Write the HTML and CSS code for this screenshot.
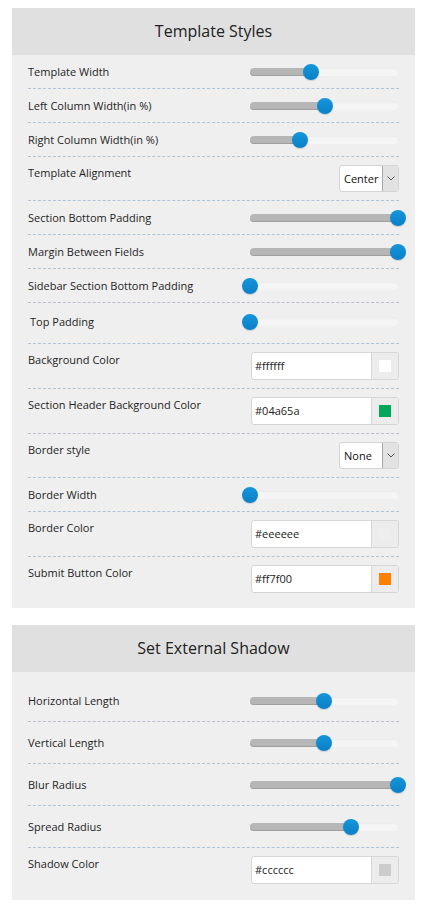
FILE: index.html
```html
<!DOCTYPE html>
<html>
<head>
<meta charset="utf-8">
<link rel="stylesheet" href="styles.css">
</head>
<body>
<div class="panel">
  <div class="panel-head">Template Styles</div>
  <div class="panel-body">
    <div class="row">
      <span class="label">Template Width</span>
      <div class="ctrl"><div class="slider"><div class="fill" style="width:41%"></div><span class="thumb" style="left:41%"></span></div></div>
    </div>
    <div class="row">
      <span class="label">Left Column Width(in %)</span>
      <div class="ctrl"><div class="slider"><div class="fill" style="width:51%"></div><span class="thumb" style="left:51%"></span></div></div>
    </div>
    <div class="row">
      <span class="label">Right Column Width(in %)</span>
      <div class="ctrl"><div class="slider"><div class="fill" style="width:34%"></div><span class="thumb" style="left:34%"></span></div></div>
    </div>
    <div class="row row-top">
      <span class="label">Template Alignment</span>
      <div class="ctrl ctrl-end">
        <div class="select"><span class="select-text">Center</span><span class="select-btn"><svg width="8" height="5" viewBox="0 0 8 5"><path d="M0.5 0.5 L4 4 L7.5 0.5" fill="none" stroke="#555" stroke-width="1"/></svg></span></div>
      </div>
    </div>
    <div class="row">
      <span class="label">Section Bottom Padding</span>
      <div class="ctrl"><div class="slider"><div class="fill" style="width:100%"></div><span class="thumb" style="left:100%"></span></div></div>
    </div>
    <div class="row">
      <span class="label">Margin Between Fields</span>
      <div class="ctrl"><div class="slider"><div class="fill" style="width:100%"></div><span class="thumb" style="left:100%"></span></div></div>
    </div>
    <div class="row">
      <span class="label">Sidebar Section Bottom Padding</span>
      <div class="ctrl"><div class="slider"><div class="fill" style="width:0%"></div><span class="thumb" style="left:0%"></span></div></div>
    </div>
    <div class="row row-tp">
      <span class="label label-indent">Top Padding</span>
      <div class="ctrl"><div class="slider"><div class="fill" style="width:0%"></div><span class="thumb" style="left:0%"></span></div></div>
    </div>
    <div class="row row-top">
      <span class="label">Background Color</span>
      <div class="ctrl ctrl-end">
        <div class="color"><span class="color-text">#ffffff</span><span class="color-btn"><span class="swatch" style="background:#ffffff"></span></span></div>
      </div>
    </div>
    <div class="row row-top">
      <span class="label">Section Header Background Color</span>
      <div class="ctrl ctrl-end">
        <div class="color"><span class="color-text">#04a65a</span><span class="color-btn"><span class="swatch" style="background:#04a65a"></span></span></div>
      </div>
    </div>
    <div class="row row-top">
      <span class="label">Border style</span>
      <div class="ctrl ctrl-end">
        <div class="select"><span class="select-text">None</span><span class="select-btn"><svg width="8" height="5" viewBox="0 0 8 5"><path d="M0.5 0.5 L4 4 L7.5 0.5" fill="none" stroke="#555" stroke-width="1"/></svg></span></div>
      </div>
    </div>
    <div class="row">
      <span class="label">Border Width</span>
      <div class="ctrl"><div class="slider"><div class="fill" style="width:0%"></div><span class="thumb" style="left:0%"></span></div></div>
    </div>
    <div class="row row-top">
      <span class="label">Border Color</span>
      <div class="ctrl ctrl-end">
        <div class="color"><span class="color-text">#eeeeee</span><span class="color-btn"><span class="swatch" style="background:#eeeeee"></span></span></div>
      </div>
    </div>
    <div class="row row-top row-last">
      <span class="label">Submit Button Color</span>
      <div class="ctrl ctrl-end">
        <div class="color"><span class="color-text">#ff7f00</span><span class="color-btn"><span class="swatch" style="background:#ff7f00"></span></span></div>
      </div>
    </div>
  </div>
</div>

<div class="panel panel-2">
  <div class="panel-head">Set External Shadow</div>
  <div class="panel-body panel-body-2">
    <div class="row row-wide">
      <span class="label">Horizontal Length</span>
      <div class="ctrl"><div class="slider"><div class="fill" style="width:50%"></div><span class="thumb" style="left:50%"></span></div></div>
    </div>
    <div class="row row-wide">
      <span class="label">Vertical Length</span>
      <div class="ctrl"><div class="slider"><div class="fill" style="width:50%"></div><span class="thumb" style="left:50%"></span></div></div>
    </div>
    <div class="row row-wide">
      <span class="label">Blur Radius</span>
      <div class="ctrl"><div class="slider"><div class="fill" style="width:100%"></div><span class="thumb" style="left:100%"></span></div></div>
    </div>
    <div class="row row-wide">
      <span class="label">Spread Radius</span>
      <div class="ctrl"><div class="slider"><div class="fill" style="width:68%"></div><span class="thumb" style="left:68%"></span></div></div>
    </div>
    <div class="row row-top row-last">
      <span class="label">Shadow Color</span>
      <div class="ctrl ctrl-end">
        <div class="color"><span class="color-text">#cccccc</span><span class="color-btn"><span class="swatch" style="background:#cccccc"></span></span></div>
      </div>
    </div>
  </div>
</div>
</body>
</html>
```

FILE: styles.css
```css
* { box-sizing: border-box; }

body {
  margin: 8px 9px 0 12px;
  background: #ffffff;
  font-family: "Open Sans", "Noto Sans", sans-serif;
  color: #222222;
}

.panel {
  background: #efefef;
}

.panel-2 {
  margin-top: 17px;
}

.panel-head {
  height: 47px;
  line-height: 47px;
  background: #e0e0e0;
  text-align: center;
  font-size: 16px;
  color: #222;
}

.panel-body {
  padding: 0 16px 7px 16px;
}

.panel-body-2 {
  padding-top: 8px;
  padding-bottom: 8px;
}

.row {
  display: flex;
  align-items: center;
  justify-content: space-between;
  padding: 8px 0;
  min-height: 34px;
  border-bottom: 1px dashed #aec3d6;
}

.row-top {
  align-items: flex-start;
}

.row-tp {
  padding: 10px 0 13px;
}

.row-wide {
  padding: 12px 0;
}

.row-last {
  border-bottom: none;
}

.label {
  font-size: 11px;
  line-height: 16px;
  color: #1e1e1e;
}

.label-indent {
  margin-left: 2px;
}

.ctrl {
  width: 149px;
  flex: none;
  display: flex;
  align-items: center;
  height: 17px;
}

.ctrl-end {
  justify-content: flex-end;
  height: auto;
}

.slider {
  position: relative;
  width: 148px;
  height: 8px;
  border-radius: 4px;
  background: #f5f5f5;
  box-shadow: inset 0 1px 1px rgba(0,0,0,0.04);
}

.fill {
  height: 8px;
  border-radius: 4px;
  background: #b6b6b6;
  box-shadow: inset 0 -1px 0 #9e9e9e;
}

.thumb {
  position: absolute;
  top: 50%;
  width: 16px;
  height: 16px;
  margin: -8px 0 0 -8px;
  border-radius: 50%;
  background: linear-gradient(#1596da, #0a7fc7);
  box-shadow: 0 1px 1px rgba(0,0,0,0.15);
}

.select {
  display: flex;
  height: 27px;
  width: 60px;
  background: #fff;
  border: 1px solid #d4d4d4;
  border-radius: 3px;
  overflow: hidden;
}

.select-text {
  flex: 1;
  font-size: 11px;
  line-height: 25px;
  padding-left: 4px;
  color: #111;
}

.select-btn {
  width: 16px;
  flex: none;
  display: flex;
  align-items: center;
  justify-content: center;
  background: #e2e2e2;
  border-left: 1px solid #a8a8a8;
}

.color {
  display: flex;
  width: 148px;
  height: 28px;
  background: #fff;
  border: 1px solid #d6d6d6;
  border-radius: 3px;
  overflow: hidden;
}

.color-text {
  flex: 1;
  font-size: 11px;
  line-height: 26px;
  padding-left: 3px;
  color: #222;
}

.color-btn {
  width: 27px;
  flex: none;
  display: flex;
  align-items: center;
  justify-content: center;
  background: #ececec;
  border-left: 1px solid #d6d6d6;
}

.swatch {
  width: 12px;
  height: 12px;
}
```
